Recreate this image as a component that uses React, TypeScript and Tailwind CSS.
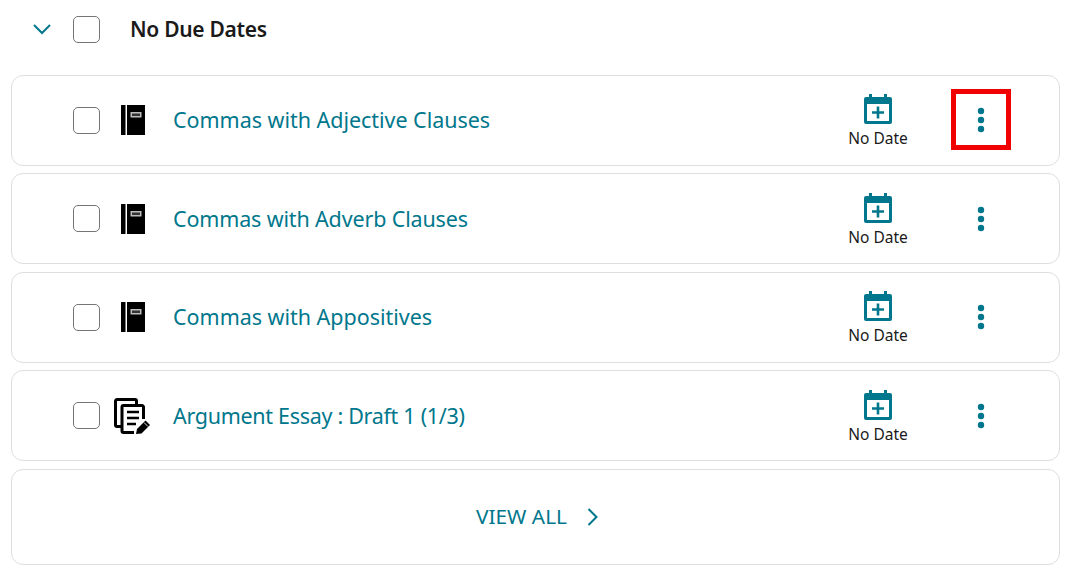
import React from "react";

const Book = () => (
  <svg width="24" height="30" viewBox="0 0 24 30" className="block mr-[2px]">
    <path d="M0.5 0H4.5V30H0.5A0.5 0.5 0 0 1 0 29.5V0.5A0.5 0.5 0 0 1 0.5 0Z" fill="#000" />
    <rect x="6" y="0" width="18" height="30" fill="#000" />
    <rect x="9.5" y="7" width="11" height="5.5" fill="#bdbdbd" />
    <rect x="11" y="8.5" width="8" height="2.5" fill="#333" />
  </svg>
);

const Essay = () => (
  <svg width="36" height="36" viewBox="0 0 36 36" className="block mr-[4px]">
    <path d="M7 28.5H3a1.5 1.5 0 0 1-1.5-1.5V3A1.5 1.5 0 0 1 3 1.5h18A1.5 1.5 0 0 1 22.5 3v4.5" fill="none" stroke="#000" strokeWidth="3" />
    <path d="M20 34.5H9.5A1.5 1.5 0 0 1 8 33V9a1.5 1.5 0 0 1 1.5-1.5H28A1.5 1.5 0 0 1 29.5 9V21" fill="none" stroke="#000" strokeWidth="3" />
    <path d="M13 14H25M13 20H25M13 26H22" stroke="#000" strokeWidth="2.6" fill="none" />
    <path d="M22 36l1-5 8.5-8.5 4.5 4.5L27.5 35.5Z" fill="#000" />
    <path d="M30 24.5l4 4" stroke="#fff" strokeWidth="0.9" />
  </svg>
);

const CalendarPlus = () => (
  <svg width="28" height="30" viewBox="0 0 28 30" className="block">
    <path d="M5 0h3v3h12V0h3v3h3a2 2 0 0 1 2 2v23a2 2 0 0 1-2 2H2a2 2 0 0 1-2-2V5a2 2 0 0 1 2-2h3Z" fill="#00778c" />
    <rect x="3" y="10" width="22" height="17" fill="#fff" />
    <path d="M14 12.5v12M8 18.5h12" stroke="#00778c" strokeWidth="2.6" />
  </svg>
);

const Dots = () => (
  <svg width="8" height="26" viewBox="0 0 8 26" className="block">
    <circle cx="4" cy="4" r="3.2" fill="#00778c" />
    <circle cx="4" cy="13" r="3.2" fill="#00778c" />
    <circle cx="4" cy="22" r="3.2" fill="#00778c" />
  </svg>
);

const Checkbox = () => (
  <span className="block w-[27px] h-[27px] shrink-0 rounded-[5px] border border-[#757575] bg-white" />
);

function Row({ title, icon, highlight, fit }: { title: string; icon: React.ReactNode; highlight?: boolean; fit: string }) {
  return (
    <div className="flex items-center h-[91px] rounded-[12px] border border-[#dedede] bg-white pl-[61px]">
      <Checkbox />
      <div className="w-[73px] flex justify-center shrink-0 pr-[5px]">{icon}</div>
      <a className={`flex-1 pt-[0.4px] text-[21.5px] text-[#00778c] ${fit}`}>{title}</a>
      <div className="w-[80px] flex flex-col items-center mr-[33px] pt-[2px]">
        <CalendarPlus />
        <span className="text-[15.5px] leading-[20px] mt-[4px] text-[#1a1a1a]">No Date</span>
      </div>
      <div className={`w-[60px] h-[61px] mr-[48px] mb-[2px] pt-[2px] flex items-center justify-center ${highlight ? "border-[5px] border-[#f00000]" : ""}`}>
        <Dots />
      </div>
    </div>
  );
}

export default function App() {
  return (
    <div className="w-[1075px] h-[580px] bg-white overflow-hidden pl-[11px] pr-[15px] font-['Noto_Sans',sans-serif]">
      <div className="flex items-center h-[74.6px] pb-[15px]">
        <svg width="18" height="11" viewBox="0 0 18 11" className="ml-[22px] block">
          <path d="M1 1l8 8 8-8" fill="none" stroke="#00778c" strokeWidth="2" />
        </svg>
        <div className="ml-[22px]"><Checkbox /></div>
        <h2 className="ml-[30px] text-[21px] tracking-[-0.3px] font-semibold text-[#1a1a1a]">No Due Dates</h2>
      </div>
      <div className="flex flex-col gap-[7.5px]">
        <Row title="Commas with Adjective Clauses" icon={<Book />} highlight fit="tracking-[-0.03px]" />
        <Row title="Commas with Adverb Clauses" icon={<Book />} fit="tracking-[-0.15px]" />
        <Row title="Commas with Appositives" icon={<Book />} fit="tracking-[-0.02px]" />
        <Row title="Argument Essay : Draft 1 (1/3)" icon={<Essay />} fit="tracking-[-0.3px]" />
        <div className="flex items-center justify-center gap-[20px] h-[96px] pl-[4px] rounded-[12px] border border-[#dedede] bg-white">
          <span className="text-[20.8px] text-[#00778c]">VIEW ALL</span>
          <svg width="12" height="18" viewBox="0 0 12 18" className="block">
            <path d="M1.5 1l8 8-8 8" fill="none" stroke="#00778c" strokeWidth="2" />
          </svg>
        </div>
      </div>
    </div>
  );
}
